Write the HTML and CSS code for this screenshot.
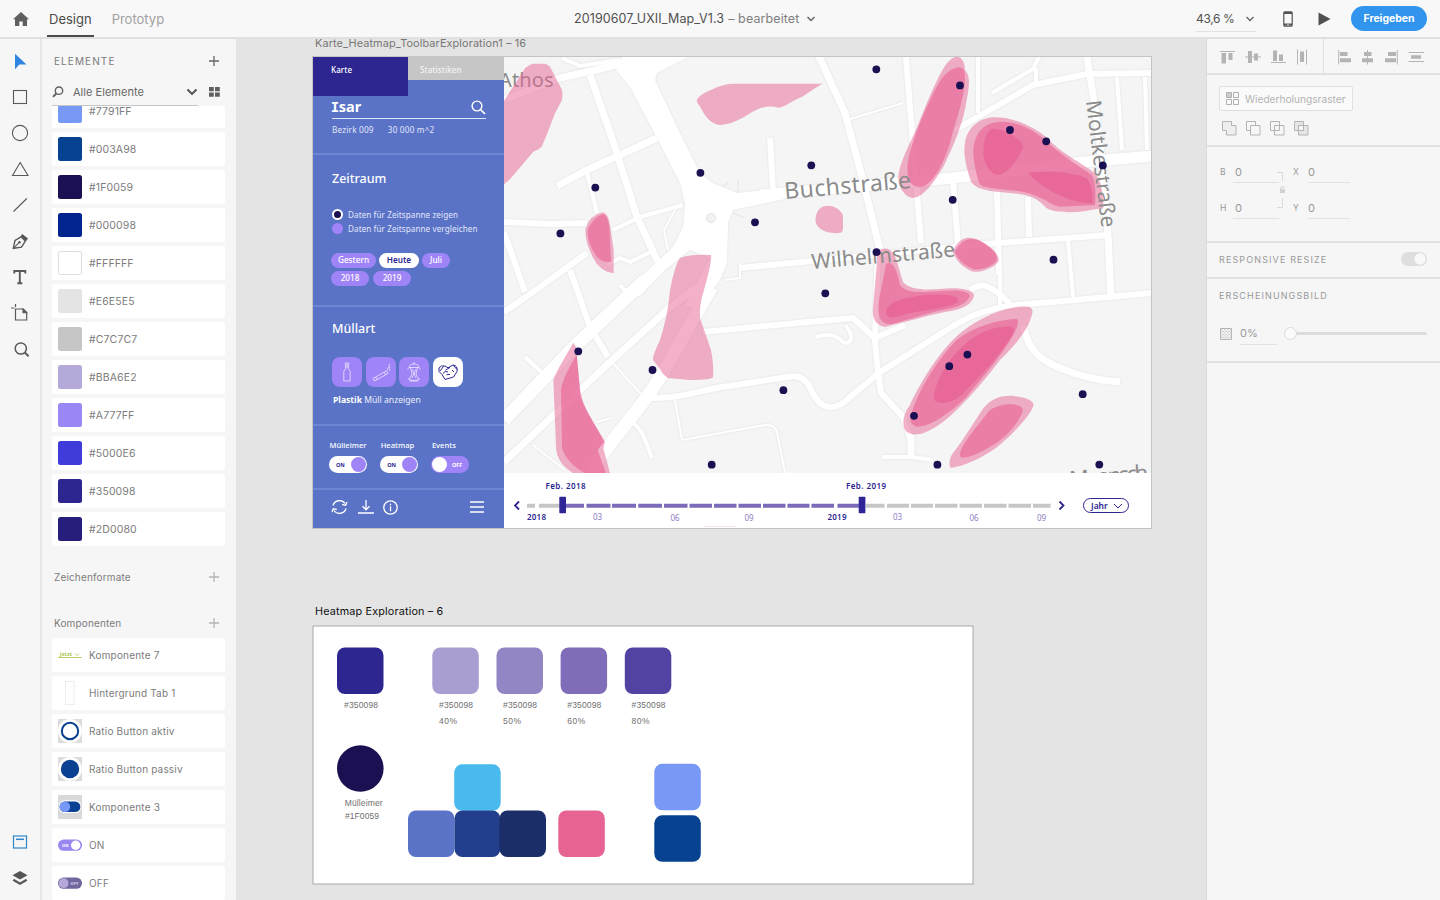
FILE: index.html
```html
<!DOCTYPE html>
<html lang="de">
<head>
<meta charset="utf-8">
<title>20190607_UXII_Map_V1.3</title>
<link rel="stylesheet" href="styles.css">
</head>
<body>
<header class="topbar">
  <svg class="home" width="18" height="16" viewBox="0 0 18 16"><path d="M9 1 1 8.3h2V15h4.3v-4.6h3.4V15H15V8.3h2z" fill="#5f5f5f"/></svg>
  <nav class="modes"><span class="mode active">Design</span><span class="mode">Prototyp</span></nav>
  <div class="doc"><span>20190607_UXII_Map_V1.3</span><em>– bearbeitet</em><svg width="10" height="8" viewBox="0 0 10 8"><path d="M1.5 2 5 5.5 8.500 2" fill="none" stroke="#666" stroke-width="1.5"/></svg></div>
  <div class="actions">
    <div class="zoomlevel"><span>43,6 %</span><svg width="10" height="8" viewBox="0 0 10 8"><path d="M1.500 2 5 5.500 8.500 2" fill="none" stroke="#666" stroke-width="1.3"/></svg></div>
    <svg class="device" width="10" height="16" viewBox="0 0 10 16"><rect x=".8" y=".8" width="8.400" height="14.400" rx="1" fill="none" stroke="#555" stroke-width="1.200"/><path d="M1 2h8M1 13.500h8" stroke="#555" stroke-width="2"/><circle cx="5" cy="13.500" r=".7" fill="#f7f7f7"/></svg>
    <svg class="play" width="13" height="14" viewBox="0 0 13 14"><path d="M.5.500 12.500 7 .5 13.500z" fill="#505050"/></svg>
    <button class="share">Freigeben</button>
  </div>
</header>
<main class="workspace">
  <aside class="tools">
    <svg viewBox="0 0 20 20"><path d="M5 2.800 16.500 13.600H9.300L5 18.300z" fill="#2f86e0"/></svg>
    <svg viewBox="0 0 20 20"><rect x="3.500" y="3.500" width="13" height="13"/></svg>
    <svg viewBox="0 0 20 20"><circle cx="10" cy="10" r="7.600"/></svg>
    <svg viewBox="0 0 20 20"><path d="M10.200 3.500 18 16.500H2.500z"/></svg>
    <svg viewBox="0 0 20 20"><path d="M3.500 16.500 16.800 3.500"/></svg>
    <svg viewBox="0 0 20 20"><path d="M3.300 17.300 5 9.500l6-3.700 4.300 4.300-3.800 6z" stroke-width="1.400"/><path d="m3.300 17.300 5.500-5.500"/><circle cx="9.500" cy="11.300" r="1.200" fill="#555" stroke="none"/><path d="m12.300 3 5.700 4.500-2 2.700-5.500-5z" fill="#555" stroke="none"/></svg>
    <svg viewBox="0 0 20 20"><path d="M4.300 6.500V4h11v2.500M9.800 4v12.200M7.300 16.300h5" stroke-width="1.900"/></svg>
    <svg viewBox="0 0 20 20"><path d="M1 5h3.500M5.500 1v3M5.500 6h7.700l3.500 3.500v7.500H5.500z" stroke-width="1.200"/><path d="M13 6l3.700 3.700H13z" fill="#555"/></svg>
    <svg viewBox="0 0 20 20"><circle cx="10.800" cy="9.500" r="5.600" stroke-width="1.500"/><path d="m14.800 13.500 3.800 3.800" stroke-width="2"/></svg>
    <span class="grow"></span>
    <svg viewBox="0 0 20 20" class="blue"><rect x="3.500" y="4" width="13" height="12" stroke-width="1.200"/><path d="M6 7.300h8" stroke-width="1.500"/></svg>
    <svg viewBox="0 0 20 20" class="layers"><path d="M10 3 17.500 7.300 10 11.600 2.500 7.300z" fill="#555" stroke="none"/><path d="m3.300 11.700 6.700 4 6.700-4" stroke-width="2.300"/></svg>
  </aside>
  <aside class="assets">
    <div class="panel-title"><span>ELEMENTE</span><svg class="plus dark" viewBox="0 0 10 10"><path d="M5 0v10M0 5h10"/></svg></div>
    <div class="filter">
      <svg width="12" height="12" viewBox="0 0 12 12"><circle cx="7" cy="4.700" r="3.700" fill="none" stroke="#606060" stroke-width="1.400"/><path d="M4.300 7.500 1 10.900" stroke="#606060" stroke-width="1.800"/></svg>
      <span>Alle Elemente</span>
      <svg class="drop" width="12" height="8" viewBox="0 0 12 8"><path d="M1.500 1.500 6 6l4.500-4.500" fill="none" stroke="#505050" stroke-width="1.900"/></svg>
      <svg class="gridicon" width="11" height="10" viewBox="0 0 11 10"><path d="M0 0h4.800v4.200H0zM6 0h4.800v4.200H6zM0 5.500h4.800v4.200H0zM6 5.500h4.800v4.200H6z" fill="#606060"/></svg>
    </div>
    <div class="list colors">
      <div class="item"><i class="chip c1"></i>#7791FF</div>
      <div class="item"><i class="chip c2"></i>#003A98</div>
      <div class="item"><i class="chip c3"></i>#1F0059</div>
      <div class="item"><i class="chip c4"></i>#000098</div>
      <div class="item"><i class="chip c5"></i>#FFFFFF</div>
      <div class="item"><i class="chip c6"></i>#E6E5E5</div>
      <div class="item"><i class="chip c7"></i>#C7C7C7</div>
      <div class="item"><i class="chip c8"></i>#BBA6E2</div>
      <div class="item"><i class="chip c9"></i>#A777FF</div>
      <div class="item"><i class="chip c10"></i>#5000E6</div>
      <div class="item"><i class="chip c11"></i>#350098</div>
      <div class="item"><i class="chip c12"></i>#2D0080</div>
    </div>
    <div class="group-title"><span>Zeichenformate</span><svg class="plus" viewBox="0 0 10 10"><path d="M5 0v10M0 5h10"/></svg></div>
    <div class="group-title second"><span>Komponenten</span><svg class="plus" viewBox="0 0 10 10"><path d="M5 0v10M0 5h10"/></svg></div>
    <div class="list components">
      <div class="item"><svg class="thumb" viewBox="0 0 24 24"><text x="2" y="12.500" font-size="5" font-weight="700" fill="#a9c247" font-family="Noto Sans">jetzt</text><path d="m17 10.500 2 2 2-2M0 14.500h24" fill="none" stroke="#b5cb60" stroke-width=".9"/></svg>Komponente 7</div>
      <div class="item"><svg class="thumb" viewBox="0 0 24 24"><rect x="7.500" y=".5" width="8.500" height="23" fill="#fff" stroke="#ececec"/></svg>Hintergrund Tab 1</div>
      <div class="item"><svg class="thumb" viewBox="0 0 24 24"><path fill="#dcdcdc" d="M0 0h24v24H0z"/><circle cx="12" cy="12" r="12" fill="#fff"/><circle cx="12" cy="12" r="8.200" fill="#fff" stroke="#0a3f90" stroke-width="2"/></svg>Ratio Button aktiv</div>
      <div class="item"><svg class="thumb" viewBox="0 0 24 24"><path fill="#dcdcdc" d="M0 0h24v24H0z"/><circle cx="12" cy="12" r="12" fill="#fff"/><circle cx="12" cy="12" r="9.200" fill="#0a4192"/></svg>Ratio Button passiv</div>
      <div class="item"><svg class="thumb" viewBox="0 0 24 24"><path fill="#d9d9d9" d="M0 0h24v24H0z"/><rect x=".6" y="5.300" width="22.800" height="12.800" rx="6.400" fill="#fff"/><rect x="1.600" y="6.400" width="20.800" height="10.600" rx="5.300" fill="#0a4192"/><circle cx="6.900" cy="11.700" r="5.300" fill="#7698f6"/></svg>Komponente 3</div>
      <div class="item"><svg class="thumb" viewBox="0 0 24 24"><rect y="6.500" width="24" height="11.300" rx="5.600" fill="#9a86f0"/><circle cx="17.700" cy="12.200" r="4.700" fill="#fff"/><text x="4" y="14" font-size="4" font-weight="700" fill="#fff" font-family="Noto Sans">ON</text></svg>ON</div>
      <div class="item"><svg class="thumb" viewBox="0 0 24 24"><rect y="6.500" width="24" height="11.300" rx="5.600" fill="#72669f"/><circle cx="5.600" cy="12.200" r="4.900" fill="#b5a9da"/><text x="12.500" y="14" font-size="4" font-weight="700" fill="#ddd6f0" font-family="Noto Sans">OFF</text></svg>OFF</div>
    </div>
  </aside>

  <section class="canvas">
    <div class="board-label first">Karte_Heatmap_ToolbarExploration1 – 16</div>
    <div class="board map-board">
      <div class="side">
        <div class="tabs"><span class="tab karte">Karte</span><span class="tab">Statistiken</span></div>
        <div class="sec search">
          <div class="searchline"><b><span class="slab">I</span>sar</b><svg width="15" height="15" viewBox="0 0 15 15"><circle cx="6" cy="6" r="4.900" fill="none" stroke="#fff" stroke-width="1.400"/><path d="m9.500 9.500 4.500 4.500" stroke="#fff" stroke-width="1.700"/></svg></div>
          <div class="meta"><span>Bezirk 009</span><span>30 000 m^2</span></div>
        </div>
        <div class="sec time">
          <h3>Zeitraum</h3>
          <div class="radio"><i class="on"></i>Daten für Zeitspanne zeigen</div>
          <div class="radio"><i></i>Daten für Zeitspanne vergleichen</div>
          <div class="pills"><span class="p45">Gestern</span><span class="p40 sel">Heute</span><span class="p28">Juli</span></div>
          <div class="pills two"><span class="p38">2018</span><span class="p38">2019</span></div>
        </div>
        <div class="sec waste">
          <h3>Müllart</h3>
          <div class="tiles">
            <svg viewBox="0 0 30 30"><path d="M13.300 6h3.400v2h-3.400zM13.700 8v3.500l-1.900 3V24h6.400v-9.500l-1.900-3V8M13.300 10h3.400"/></svg>
            <svg viewBox="0 0 30 30"><path d="m7 21.500 13.500-7.700 1.500 2.600L8.500 24zM9.500 20l1.600 2.700M18 15.300l1.500 2.600M21.500 13c-1-3 3-2 1.500-6M23.500 14c1-2-1-2 0-4"/></svg>
            <svg viewBox="0 0 30 30"><path d="M10 10.500c0-2 2-3.500 5-3.500s5 1.500 5 3.500zM15 5v2M10 10.500l-1.500 2M20 10.500l1.500 2M11.500 10.500l1.500 6.500-2.500 5M18.500 10.500 17 17l2.500 5M9 21.500c2 2.500 10 2.500 12 0M10.500 24h9M13 12l4 9M17 12l-4 9"/></svg>
            <svg class="sel" viewBox="0 0 30 30"><path d="M6 11Q8 8 12 9l3 1.800L20 8q5 .5 4 6.500L20.500 20 12 22.500 9 17.500 6 14.500zM7 14l3.500-4.500M12.500 13l4.500-2.500M10 16.500q2-3.500 5-1.500M20.500 8.500l3.500 4M13.500 17.800l3.500-.5M19 13l2 2"/></svg>
          </div>
          <p><b>Plastik</b> Müll anzeigen</p>
        </div>
        <div class="sec switches">
          <div class="sw"><label>Mülleimer</label><span class="toggle">ON<i></i></span></div>
          <div class="sw"><label>Heatmap</label><span class="toggle">ON<i></i></span></div>
          <div class="sw"><label>Events</label><span class="toggle off"><i></i>OFF</span></div>
        </div>
        <div class="foot">
          <svg width="17" height="16" viewBox="0 0 17 16"><path d="M2 6.500C3.500 1 11 0 14 4.500M16 3l-1.300 3.300-3.500-.8M15 9.500C13.500 15 6 16 3 11.500M1 13l1.300-3.300 3.500.8"/></svg>
          <svg width="16" height="16" viewBox="0 0 16 16"><path d="M8 1v9.500M4.500 7.300 8 10.800l3.500-3.500M0 14h16"/></svg>
          <svg width="15" height="15" viewBox="0 0 15 15"><circle cx="7.500" cy="7.500" r="6.700"/><path d="M7.500 6.300v5M7.500 3.700v1.500"/></svg>
          <svg class="menu" width="14" height="12" viewBox="0 0 14 12"><path d="M0 1h14M0 6h14M0 11h14"/></svg>
        </div>
      </div>
      <div class="right">
        <svg class="map" width="648" height="416" viewBox="504 57 648 416">
          <rect x="504" y="57" width="648" height="416" fill="#f5f5f5"/>
          <g class="roads">
            <path class="area" d="M616 70 622 57H688L657 73 655 80 677 127 700 173 713 183 737 193 785 188V199L733 210 728 223 727 263 720 280 700 307H684L710 258 690 250 665 270 640 296 620 296 673 247 683 227 685 203 680 183 657 138 630 87Z"/>
            <g stroke-width="13"><path d="M645 280 575 346 504 420"/><path d="M712 287 700 307 663 373 647 397 600 457 590 475"/></g>
            <g stroke-width="11"><path d="M760 195 862 186 953 178 1083 162 1152 156"/></g>
            <g stroke-width="7">
              <path d="M703 282 667 310 610 362 504 462"/>
              <path d="M816 50 845 113 862 177 880 250"/>
              <path d="M504 100 560 78 613 66 640 57"/>
              <path d="M590 75 615 147 637 217 658 262"/>
              <path d="M557 186 587 170 657 138"/>
              <path d="M1023 325C1028 350 1040 360 1060 368 1078 376 1095 380 1120 382"/>
              <path d="M1087 57 1095 107 1103 170 1108 235 1111 297"/>
              <path d="M911 435V457"/>
            </g>
            <g stroke-width="6">
              <path d="M647 398C690 398 700 389 730 386L787 377C808 373 809 388 815 397 824 411 838 410 850 397L880 372 920 347 950 328C980 308 1005 305 1053 302L1152 293"/>
              <path d="M703 332 830 320 853 318 863 327 875 338 905 325"/>
              <path d="M878 250 875 340 877 363 881 393 903 417 911 440"/>
              <path d="M970 290C985 280 990 289 1000 294L1010 304"/>
              <path d="M985 244 1108 235"/><path d="M740 268 812 261 985 244"/>
              <path d="M955 130 1033 85 1087 74 1152 73"/>
              <path d="M906 57 912 133 921 243"/><path d="M953 180 958 245"/><path d="M997 190 999 275"/>
              <path d="M504 222 550 224 587 223"/><path d="M504 312 533 292 587 253"/>
              <path d="M570 270 590 327 608 357"/><path d="M770 138 773 190"/><path d="M1028 197 1029 237"/>
              <path d="M504 232 525 292"/>
            </g>
            <g stroke-width="4">
              <path d="M562 58 580 66 620 60"/><path d="M978 57V113"/>
              <path d="M613 230 640 217 683 205"/><path d="M992 93 1033 69 1039 57M1036 68V82"/>
              <path d="M607 265 620 258 630 262 655 250"/><path d="M525 357 547 377"/>
              <path d="M632 422C643 430 645 440 652 458"/><path d="M815 337C840 330 840 343 846 343 854 342 852 333 845 325"/>
              <path d="M1117 77 1122 150"/><path d="M1145 77 1147 150"/><path d="M1068 240 1073 297"/>
              <path d="M882 457H911L933 460"/><path d="M1000 270V305"/><path d="M587 173 597 213"/><path d="M620 285 628 294"/>
            </g>
            <g stroke-width="2">
              <path d="M675 400 682 440 765 425C775 424 777 430 778 437L785 473"/><path d="M610 360 642 395"/>
              <path d="M847 120 903 103"/><path d="M533 445 565 470"/><path d="M596 422 612 418"/>
              <path d="M725 280 740 278 740 263"/><path d="M668 250 664 230 675 210"/>
            </g>
          </g>
          <circle cx="711" cy="218" r="4.500" fill="#f2f2f2" stroke="#e2e2e2"/>
          <path d="M723 186 728 183M733 213 743 217M738 180V192" stroke="#e2e2e2" fill="none"/>
          <text x="499" y="87" font-size="20" textLength="54.500" class="street">Athos</text>
          <g class="heat">
            <g transform="translate(500 50) scale(.33333)">
              <path d="M0 160 12 152 75 55Q90 42 100 41H135Q150 45 155 60L185 118Q190 135 185 152L165 190 140 255 125 290 115 298 100 305 30 388 12 403H0Z"/>
              <path d="M592 147Q600 135 620 125C650 112 670 101 700 101H968C940 115 925 132 890 148 865 160 850 173 835 173 810 165 780 172 755 187 720 210 690 225 655 225 620 215 610 185 597 165Q587 155 592 147Z"/>
              <path d="M308 487Q325 490 330 525L341 600 341 670Q300 665 280 625 252 570 257 535 270 495 308 487Z"/>
              <path class="mid" d="M310 492Q322 495 328 530L333 635Q310 640 290 620 260 575 263 540 280 500 310 492Z"/>
            </g>
            <path d="M680 258Q690 254 711 255 712 262 704 290 699 305 700 318L711 350Q714 365 713 377 712 380 690 380L668 378Q663 375 660 369L653 360Q652 357 660 340 668 315 670 290 675 265 680 258Z"/>
            <path d="M823 206.500C832 204 841 209 843 216L843 228Q843 233 839 233C827 234 815 229 815.500 219Q816 210 823 206.500Z"/>
            <path d="M877 252C884 246 893 247 897 262L903 282C910 290 925 290 940 289 960 287 973 290 974 295 973 305 960 310 945 312 925 316 905 322 885 327 875 325 872 318 873 308L877 262Z"/>
            <path class="mid" d="M886 264C893 260 897 270 900 285 905 293 920 293 940 291 955 290 969 290 970 296 966 305 955 308 942 310 925 314 910 319 892 324 880 325 877 317 879 300Z"/>
            <path class="hot" d="M886 313C886 303 900 298 925 295 950 293 960 296 958 302 945 310 915 310 900 316Q887 320 886 313Z"/>
            <g transform="translate(820 50) scale(.33333)">
              <path d="M410 20C430 22 435 45 435 60 450 75 450 100 440 150 430 220 400 290 370 350 340 400 310 440 280 444 255 444 235 410 235 385 235 350 260 300 290 235 320 160 360 60 385 35Q398 20 410 20Z"/>
              <path class="mid" d="M410 53C425 50 432 55 434 70 440 120 415 190 395 260 375 340 335 410 300 411 265 410 262 380 262 345 275 270 310 190 345 120 365 80 385 58 410 53Z"/>
              <path d="M520 202C580 200 640 230 680 262 720 310 780 335 825 370Q850 400 850 475L825 478C770 490 710 490 680 475 650 440 620 432 560 428 500 425 455 415 450 385 435 340 430 300 435 280 440 240 470 205 520 202Z"/>
              <path class="mid" d="M545 215C600 215 650 245 680 275 730 320 780 350 815 375Q830 400 825 465L720 470C690 465 670 440 620 428 560 415 490 420 478 400 465 360 460 330 460 300 465 240 500 215 545 215Z"/>
              <path class="hot" d="M515 237C545 230 610 270 610 290 600 320 565 370 535 375 510 375 490 335 490 310Q490 250 515 237Z"/>
              <path class="hot" d="M625 368C680 362 760 365 800 385Q820 410 818 460C760 460 690 430 640 385Z"/>
              <path d="M440 563C470 562 490 575 520 600Q540 620 535 635C520 655 480 668 460 665 430 655 410 635 398 605Q410 570 440 563Z"/>
              <path class="mid" d="M450 567C475 565 495 580 515 597Q535 615 530 632C515 650 480 660 462 658 430 645 415 630 404 605Q420 573 450 567Z"/>
            </g>
            <g transform="translate(820 280) scale(.33333)">
              <path d="M595 80C630 78 640 82 637 100 625 150 590 190 540 240 480 320 390 420 340 445 300 470 270 468 255 450 245 430 250 400 270 375 290 330 350 220 420 160 480 110 550 85 595 80Z"/>
              <path class="mid" d="M590 116Q598 120 590 145C560 210 490 290 440 350 390 400 330 440 290 440Q268 435 272 410C290 340 350 240 410 180 460 140 530 120 590 116Z"/>
              <path class="hot" d="M560 140Q588 135 580 160C540 230 470 300 430 340 400 370 360 375 345 362Q335 350 350 315C370 260 400 220 450 180 490 150 530 140 560 140Z"/>
              <path d="M575 347Q640 355 641 375C635 400 590 450 550 485 500 530 430 560 392 563Q383 550 395 525C430 480 460 430 490 385Q520 345 575 347Z"/>
              <path class="mid" d="M570 372Q610 375 609 392C590 440 550 480 510 500 480 520 440 535 425 533Q415 528 425 505C450 460 480 430 505 395Q525 375 570 372Z"/>
            </g>
            <g transform="translate(500 280) scale(.33333)">
              <path d="M220 188 228 200 240 330C250 390 290 440 315 485L310 505 330 580H220C190 560 170 540 168 500L160 300C170 270 205 215 220 188Z"/>
              <path class="mid" d="M230 225 242 350C255 390 290 440 312 485L293 510 318 580H255C220 560 190 530 186 500L183 330C185 300 215 250 230 225Z"/>
            </g>
          </g>
          <g class="street">
            <text transform="translate(785 199) rotate(-5)" font-size="23" textLength="127">Buchstraße</text>
            <text transform="translate(812 269) rotate(-5)" font-size="21" textLength="144">Wilhelmstraße</text>
            <text transform="translate(1086 101) rotate(83)" font-size="21" textLength="128">Moltkestraße</text>
            <text transform="translate(1070 487) rotate(-5)" font-size="22" textLength="79">Moonsch</text>
          </g>
          <g fill="#1a1052">
            <circle cx="876.300" cy="69.300" r="3.900"/><circle cx="960" cy="85.400" r="3.900"/><circle cx="1010" cy="130" r="3.900"/><circle cx="1046.200" cy="141.300" r="3.900"/><circle cx="1102.800" cy="165.400" r="3.900"/><circle cx="811.300" cy="165.300" r="3.900"/><circle cx="700.400" cy="172.800" r="3.900"/><circle cx="595.300" cy="187.600" r="3.900"/><circle cx="952.700" cy="199.800" r="3.900"/><circle cx="755" cy="222.300" r="3.900"/><circle cx="560.400" cy="233.400" r="3.900"/><circle cx="876.500" cy="252.200" r="3.900"/><circle cx="1053.500" cy="259.700" r="3.900"/><circle cx="825.300" cy="293.300" r="3.900"/><circle cx="578.300" cy="351.300" r="3.900"/><circle cx="967.400" cy="354.600" r="3.900"/><circle cx="652.500" cy="370" r="3.900"/><circle cx="949.300" cy="366.200" r="3.900"/><circle cx="783.400" cy="390.200" r="3.900"/><circle cx="1082.700" cy="394.200" r="3.900"/><circle cx="914" cy="415.800" r="3.900"/><circle cx="711.700" cy="464.700" r="3.900"/><circle cx="937.400" cy="464.700" r="3.900"/><circle cx="1099.300" cy="464.600" r="3.900"/>
          </g>
        </svg>
        <div class="timeline">
          <svg width="580" height="54" viewBox="504 473 580 54">
            <path d="m519 501.500-4 4 4 4M1059.500 501.500l4 4-4 4" fill="none" stroke="#2c2591" stroke-width="1.800"/>
            <path d="M527 505.800h8M539 505.800h22M866 505.800h18.500M887 505.800h22M911 505.800h22M935 505.800h22.500M959.500 505.800h22.500M984 505.800h22.500M1008.500 505.800h22.500M1033 505.800h17.500" stroke="#c6c6c6" stroke-width="4"/>
            <path d="M566 505.800h18M586.500 505.800h24M612 505.800h24M638.300 505.800h23.700M664 505.800h23.500M689.500 505.800h22.500M714 505.800h22.500M738.500 505.800h22.500M763 505.800h22.500M787.500 505.800h22M811.500 505.800h22.500M837.500 505.800h22" stroke="#7c6bb8" stroke-width="4"/>
            <rect x="559.300" y="496.700" width="6.700" height="16.500" rx=".8" fill="#2f2596"/><rect x="858.700" y="496.700" width="6.700" height="16.500" rx=".8" fill="#2f2596"/>
            <g class="tl-strong"><text x="545.500" y="489" textLength="40">Feb. 2018</text><text x="846" y="489" textLength="40">Feb. 2019</text><text x="527" y="520.300" textLength="19">2018</text><text x="827.500" y="520.300" textLength="19">2019</text></g>
            <g class="tl-light"><text x="593" y="520.300">03</text><text x="670.500" y="521">06</text><text x="744.500" y="521">09</text><text x="893" y="520.300">03</text><text x="969.500" y="521">06</text><text x="1037" y="521">09</text></g>
            <path d="M704 526.700h32M933 526.700" stroke="#f3dbe5" stroke-width=".8"/>
          </svg>
          <span class="year">Jahr<svg width="10" height="6" viewBox="0 0 10 6"><path d="m1 1 4 4 4-4" fill="none" stroke="#2c2591"/></svg></span>
        </div>
      </div>
    </div>

    <div class="board-label second">Heatmap Exploration – 6</div>
    <svg class="board swatches" width="662" height="260" viewBox="312 625.500 662 260">
      <rect x="313" y="626.500" width="660" height="258" fill="#fff" stroke="#a8a8a8"/>
      <g>
        <rect x="337" y="648" width="46.500" height="46.500" rx="8" fill="#2d2590"/>
        <rect x="432.300" y="648" width="46.500" height="46.500" rx="8" fill="#aa9dd1"/>
        <rect x="496.500" y="648" width="46.500" height="46.500" rx="8" fill="#9485c5"/>
        <rect x="560.600" y="648" width="46.500" height="46.500" rx="8" fill="#7f6db9"/>
        <rect x="624.800" y="648" width="46.500" height="46.500" rx="8" fill="#5243a2"/>
        <circle cx="360.300" cy="769" r="23.300" fill="#1a1052"/>
        <rect x="454.200" y="764.800" width="46.500" height="46.500" rx="8" fill="#49baed"/>
        <rect x="408" y="811" width="46.500" height="46.500" rx="8" fill="#5a73c7"/>
        <rect x="454.500" y="811" width="45.800" height="46.500" rx="8" fill="#223e8c"/>
        <rect x="499.500" y="811" width="46.500" height="46.500" rx="8" fill="#1b2e68"/>
        <rect x="558.300" y="811" width="46.500" height="46.500" rx="8" fill="#e66393"/>
        <rect x="654.300" y="764.300" width="46.500" height="46.500" rx="8" fill="#7898f5"/>
        <rect x="654.300" y="815.800" width="46.500" height="46.500" rx="8" fill="#06428f"/>
      </g>
      <g class="swatch-text">
        <text x="344" y="708" textLength="34">#350098</text><text x="439" y="708" textLength="34">#350098</text><text x="503" y="708" textLength="34">#350098</text><text x="567.300" y="708" textLength="34">#350098</text><text x="631.500" y="708" textLength="34">#350098</text>
        <text x="439" y="724" textLength="18">40%</text><text x="503" y="724" textLength="18">50%</text><text x="567.300" y="724" textLength="18">60%</text><text x="631.500" y="724" textLength="18">80%</text>
        <text x="344.700" y="806" textLength="38">Mülleimer</text><text x="345" y="819" textLength="34">#1F0059</text>
      </g>
    </svg>
  </section>

  <aside class="inspector">
    <div class="align">
      <svg width="110" height="18" viewBox="1218 49 110 18"><path d="M1220 51.500h15M1245 57h16M1271 62.500h15M1297.500 49.500v15M1306.500 49.500v15" stroke="#b4b4b4"/><path d="M1221.500 53h4.500v10.500h-4.500zM1228.500 53h4v7h-4zM1248 51h4v12h-4zM1254 53.500h4v7h-4zM1273 50.500h4v10.500h-4zM1279 54.500h4v6.500h-4zM1300 51.500h4v10.500h-4z" fill="#b4b4b4"/></svg>
      <svg class="halign" width="90" height="18" viewBox="1336 49 90 18"><path d="M1338.700 50v14.500M1367.500 50v14.500M1397.300 50v14.500M1408.500 52.500h15.500M1408.500 61.500h15.500" stroke="#b4b4b4"/><path d="M1340 52h7.500v4h-7.500zM1340 58.300h11v4h-11zM1364 52h7.500v4h-7.500zM1362 58.300h11v4h-11zM1388 52h8v4h-8zM1385 58.300h11v4h-11zM1411 55.200h10v3.600h-10z" fill="#b4b4b4"/></svg>
    </div>
    <div class="block repeat">
      <div class="repeat-btn"><svg width="13" height="13" viewBox="0 0 13 13"><path d="M.5.500h5v5h-5z" fill="#ccc"/><path d="M.5.500h5v5h-5zM7.500.500h5v5h-5zM.5 7.500h5v5h-5zM7.500 7.500h5v5h-5z" fill="none" stroke="#b0b0b0"/></svg>Wiederholungsraster</div>
      <div class="bool">
        <svg viewBox="0 0 15 15"><path d="M.5.500h9v4h4.500v9.500h-9.500v-4.500h-4z" fill="#eee"/></svg>
        <svg viewBox="0 0 15 15"><path d="M4.500 9.500h-4v-9h9v4"/><path d="M4.500 4.500h9.500v9.500h-9.500z"/></svg>
        <svg viewBox="0 0 15 15"><path d="M.5.500h9v9h-9zM4.500 4.500h9.500v9.500h-9.500z"/></svg>
        <svg viewBox="0 0 15 15"><path d="M.5.500h9v9h-9zM4.500 4.500h9.500v9.500h-9.500z" fill="#e6e6e6" fill-rule="evenodd"/></svg>
      </div>
    </div>
    <div class="block dims">
      <div class="field"><label>B</label><span>0</span></div><div class="field x"><label>X</label><span>0</span></div>
      <div class="field"><label>H</label><span>0</span></div><div class="field x"><label>Y</label><span>0</span></div>
      <svg class="link" width="10" height="38" viewBox="0 0 10 38"><path d="M0 1.500h5.500v9M0 36.500h5.500v-9" fill="none" stroke="#dadada"/><rect x="3" y="18" width="5" height="4" fill="#d2d2d2"/><path d="M4 18v-2h3v1" fill="none" stroke="#d2d2d2"/></svg>
    </div>
    <div class="block resize"><span>RESPONSIVE RESIZE</span><i class="rtoggle"></i></div>
    <div class="block look">
      <span>ERSCHEINUNGSBILD</span>
      <div class="opacity">
        <svg width="12" height="12" viewBox="0 0 12 12"><path d="M.5.500h11v11H.5z" fill="none" stroke="#b5b5b5"/><path d="M1 2h10M1 5h10M1 8h10M1 11h10" stroke="#c5c5c5" stroke-dasharray="1.500 1.500"/><path d="M2.500 3.500h9M2.500 6.500h9M2.500 9.500h9" stroke="#c5c5c5" stroke-dasharray="1.500 1.500"/></svg>
        <span class="pct">0%</span><div class="slider"><i></i></div>
      </div>
    </div>
  </aside>
</main>
</body>
</html>
```
FILE: styles.css
```css
* { box-sizing: border-box; }
body { margin: 0; width: 1440px; height: 900px; overflow: hidden; background: #e4e4e4; font-family: Inter, "Liberation Sans", sans-serif; color: #666; display: flex; flex-direction: column; }
svg { display: block; flex: none; }
i, em { font-style: normal; }

/* top bar */
.topbar { height: 39px; flex: none; background: #f8f8f8; border-bottom: 2px solid #e0e0e0; display: flex; align-items: center; position: relative; }
.home { margin-left: 12px; }
.modes { display: flex; align-self: stretch; margin-left: 17px; gap: 16px; }
.mode { font-size: 13px; line-height: 38px; padding: 0 2px; height: 37px; color: #a0a0a0; }
.mode.active { color: #4b4b4b; border-bottom: 2px solid #4b4b4b; }
.doc { position: absolute; left: 574px; top: 0; display: flex; align-items: center; height: 37px; font-size: 12.500px; letter-spacing: .100px; color: #505050; white-space: nowrap; }
.doc em { color: #808080; margin-left: 4px; }
.doc svg { margin-left: 7px; }
.actions { margin-left: auto; display: flex; align-items: center; padding-right: 13px; height: 100%; }
.zoomlevel { display: flex; align-items: center; width: 60px; height: 24px; justify-content: space-between; font-size: 12px; letter-spacing: -.350px; color: #505050; border-bottom: 1px solid #e2e2e2; padding: 0 1px 2px 0; margin-top: 3px; }
.device { margin-left: 27px; }
.play { margin-left: 25px; }
.share { margin-left: 20px; width: 76px; height: 25px; border: 0; border-radius: 13px; background: #3195ee; color: #fff; font: 700 10.500px Inter, sans-serif; letter-spacing: -.050px; padding: 0; }
.workspace { flex: 1; display: flex; min-height: 0; }

/* tool strip */
.tools { width: 42px; background: #f6f6f6; border-right: 2px solid #e6e6e6; display: flex; flex-direction: column; align-items: center; gap: 16px; padding: 12px 0 12px; }
.tools svg { width: 20px; height: 20px; fill: none; stroke: #5a5a5a; stroke-width: 1.1; }
.tools svg:first-child { stroke: none; }
.tools .blue { stroke: #2f86c8; }
.grow { flex: 1; }

/* assets panel */
.assets { width: 194px; background: #f6f6f6; padding: 0 11px 0 10px; overflow: hidden; display: flex; flex-direction: column; }
.assets > * { flex: none; }
.panel-title { height: 38px; padding: 6px 5px 0 2px; display: flex; align-items: center; justify-content: space-between; font-size: 10px; letter-spacing: 1.100px; color: #7b7b7b; }
.plus { width: 10px; height: 10px; fill: none; stroke: #b5b5b5; stroke-width: 1.300; margin-right: 1px; }
.plus.dark { stroke: #666; }
.filter { height: 29px; padding-top: 1px; display: flex; align-items: center; font-size: 11px; color: #666; border-bottom: 1px solid transparent; border-image: linear-gradient(90deg, #c6c6c6 145px, transparent 145px) 1; }
.filter span { margin-left: 9px; width: 113px; letter-spacing: .030px; }
.gridicon { margin-left: 11px; }
.list { display: flex; flex-direction: column; gap: 4px; overflow: hidden; }
.colors .item:first-child { margin-top: -12px; }
.item { height: 34px; flex: none; background: #fff; display: flex; align-items: center; padding-left: 6px; font-size: 10.500px; letter-spacing: .120px; color: #7c7c7c; border-radius: 2px; }
.components .item { font-size: 10px; letter-spacing: .180px; }
.chip { width: 24px; height: 24px; border-radius: 2.500px; margin-right: 7px; }
.thumb { width: 24px; height: 24px; margin-right: 7px; }
.c1 { background: #7898f5; } .c2 { background: #06428f; } .c3 { background: #1a1052; } .c4 { background: #02248e; }
.c5 { background: #fff; border: 1px solid #ddd; } .c6 { background: #e4e4e4; } .c7 { background: #c6c6c6; } .c8 { background: #b5a9da; }
.c9 { background: #9a86f5; } .c10 { background: #403cdc; } .c11 { background: #2d2590; } .c12 { background: #261e7a; }
.group-title { height: 46px; padding: 16px 5px 0 2px; display: flex; align-items: center; justify-content: space-between; font-size: 10px; letter-spacing: .150px; color: #7c7c7c; }

/* canvas */
.canvas { width: 971px; position: relative; overflow: hidden; background: #e4e4e4; border-right: 1px solid #dadada; }
.board { position: absolute; }
.board-label { position: absolute; left: 79px; line-height: 14px; white-space: nowrap; }
.board-label.first { top: -3px; color: #777; font-size: 10.900px; letter-spacing: .100px; }
.board-label.second { top: 566px; color: #111; font-size: 10.800px; letter-spacing: .170px; }
.map-board { left: 76px; top: 17px; width: 840px; height: 473px; border: 1px solid #c4c4c4; display: flex; background: #fff; }
.swatches { left: 76px; top: 586px; }

/* map side bar */
.side { width: 191px; height: 471px; flex: none; background: #5a73c7; color: #fff; font-family: "Noto Sans", sans-serif; }
.tabs { height: 23px; display: flex; background: #c6c6c6; font-size: 8px; font-weight: 500; line-height: 26px; letter-spacing: .100px; }
.tab { padding-left: 12px; color: #f4f4f4; }
.karte { width: 95px; height: 39px; padding-left: 18px; background: #2d2590; color: #fff; }
.sec { border-bottom: 2px solid #6f86d2; }
.search { height: 75px; padding: 17px 18px 0 19px; }
.searchline { display: flex; justify-content: space-between; height: 22px; border-bottom: 1.500px solid #dfe5fa; font-size: 14.500px; line-height: 18px; }
.searchline svg { margin-top: 3px; }
.slab { font-family: "DejaVu Sans Mono", monospace; font-size: 14px; margin: 0 -.500px 0 -1.200px; }
.meta { display: flex; gap: 14px; font-size: 8.200px; letter-spacing: .200px; line-height: 12px; margin-top: 5px; color: #e2e7fa; }
.time { height: 152px; padding: 15px 0 0 18px; }
h3 { margin: 0; font-size: 12.500px; font-weight: 500; line-height: 18px; padding-left: 1px; }
.radio { display: flex; align-items: center; height: 14px; font-size: 8.100px; letter-spacing: .090px; color: #e2e7fa; white-space: nowrap; }
h3 + .radio { margin-top: 19px; }
.radio i { width: 11px; height: 11px; border-radius: 50%; background: #9f84f7; margin: 0 5px 0 1px; }
.radio .on { background: #1a1052; border: 2.500px solid #fff; }
.pills { display: flex; gap: 3px; margin-top: 18px; }
.pills.two { margin-top: 3px; gap: 4px; }
.pills span { height: 15px; border-radius: 8px; background: #9f84f7; font-size: 8.200px; line-height: 14.500px; text-align: center; font-weight: 500; }
.pills .sel { background: #fff; color: #2c2591; font-weight: 600; }
.p45 { width: 45px; } .p40 { width: 40px; } .p28 { width: 28px; } .p38 { width: 38px; }
.waste { height: 119px; padding: 13px 0 0 18px; }
.tiles { display: flex; gap: 3.500px; margin: 19px 0 0 1px; }
.tiles svg { width: 30px; height: 30px; border-radius: 8px; background: #9f84f7; fill: none; stroke: #eee9ff; stroke-width: .8; }
.tiles .sel { background: #fff; stroke: #2c2591; stroke-width: 1; }
.waste p { margin: 6px 0 0 2px; font-size: 8.600px; line-height: 14px; color: #eef0fb; }
.waste p b { color: #fff; }
.switches { height: 64px; padding: 13px 0 0 16px; display: flex; }
.sw { width: 51.200px; font-weight: 500; }
.sw label { display: block; font-size: 7.600px; line-height: 12px; margin-left: .500px; white-space: nowrap; }
.toggle { display: flex; align-items: center; justify-content: space-between; width: 38px; height: 17px; border-radius: 9px; background: #fff; color: #2c2591; font-size: 5.500px; font-weight: 700; padding: 0 1px 0 7px; margin-top: 5px; }
.toggle i { width: 15px; height: 15px; border-radius: 50%; background: #9f84f7; }
.toggle.off { background: #9f84f7; color: #fff; padding: 0 7px 0 1px; }
.toggle.off i { background: #fff; }
.foot { height: 38px; display: flex; align-items: center; padding: 0 20px 4px 18px; gap: 9.500px; }
.foot svg { fill: none; stroke: #fff; stroke-width: 1.300; }
.foot .menu { margin-left: auto; }

/* map */
.right { flex: none; width: 647px; height: 471px; overflow: hidden; }
.roads { fill: none; stroke: #fff; stroke-linejoin: round; filter: drop-shadow(0 0 .9px rgba(0,0,0,.09)); }
.roads .area { fill: #fff; stroke: none; }
.heat path { fill: #e76394; fill-opacity: .5; }
.heat .mid { fill-opacity: .62; }
.heat .hot { fill-opacity: .75; }
.street { font-family: "Noto Sans", sans-serif; fill: #8b8b8b; }
.timeline { display: flex; height: 54px; background: #fff; }
.tl-strong { font: 600 8px "Noto Sans", sans-serif; fill: #2c2591; }
.tl-light { font: 8px "Noto Sans", sans-serif; fill: #8d80c4; }
.year { width: 46px; height: 15px; margin: 25px 0 0 -1px; border: 1px solid #2c2591; border-radius: 8px; color: #2c2591; font: 600 8.500px/13px "Noto Sans", sans-serif; display: flex; align-items: center; justify-content: space-between; padding: 0 5px 0 7px; }
.swatch-text { font: 8.500px "Liberation Sans", sans-serif; fill: #707070; }

/* inspector */
.inspector { width: 233px; background: #f6f6f6; color: #999; }
.align { height: 36px; border-bottom: 2px solid #e1e1e1; display: flex; padding: 10px 0 0 11px; background: linear-gradient(#e1e1e1, #e1e1e1) 116px 0 / 1px 100% no-repeat; }
.halign { margin-left: 8px; }
.block { border-bottom: 2px solid #e1e1e1; }
.repeat { height: 72px; padding: 11px 12px; }
.repeat-btn { width: 134px; height: 25px; border: 1px solid #e0e0e0; border-radius: 2px; background: #fafafa; display: flex; align-items: center; gap: 6px; padding-left: 6px; font-size: 10.200px; letter-spacing: -.020px; color: #b4b4b4; }
.bool { display: flex; gap: 9px; margin: 10px 0 0 3px; }
.bool svg { width: 15px; height: 15px; fill: none; stroke: #b4b4b4; }
.dims { height: 96px; padding: 14px 0 0 13px; display: grid; grid-template-columns: 73px 65px; grid-auto-rows: 36px; position: relative; font-size: 11px; }
.field { display: flex; height: 22px; line-height: 22px; }
.field label { font-size: 8.500px; width: 13px; flex: none; }
.field span { flex: 1; border-bottom: 1px solid #e2e2e2; padding-left: 2px; margin-right: 14px; font-size: 11px; }
.field.x label { width: 15px; }
.field.x span { margin-right: 8px; padding-left: 0; }
.link { position: absolute; left: 70px; top: 24px; }
.resize { height: 36px; display: flex; align-items: center; justify-content: space-between; padding: 0 13px 2px 12px; font-size: 9px; letter-spacing: 1.130px; }
.rtoggle { width: 26px; height: 14px; border-radius: 7px; background: radial-gradient(circle at 19px 7px, #f8f8f8 5.300px, #dedede 6px); }
.look { height: 84px; padding: 11px 13px 0 12px; font-size: 9px; line-height: 12px; letter-spacing: 1.130px; }
.opacity { display: flex; align-items: center; margin-top: 19px; height: 25px; letter-spacing: 0; font-size: 11px; padding-left: 1px; }
.pct { margin-left: 8px; width: 37px; height: 23px; line-height: 22px; border-bottom: 1px solid #e2e2e2; }
.slider { flex: 1; margin-left: 7px; height: 3px; border-radius: 2px; background: #dcdcdc; position: relative; }
.slider i { position: absolute; left: 0; top: -5px; width: 13px; height: 13px; border-radius: 50%; background: #fafafa; border: 1px solid #ddd; }
```
